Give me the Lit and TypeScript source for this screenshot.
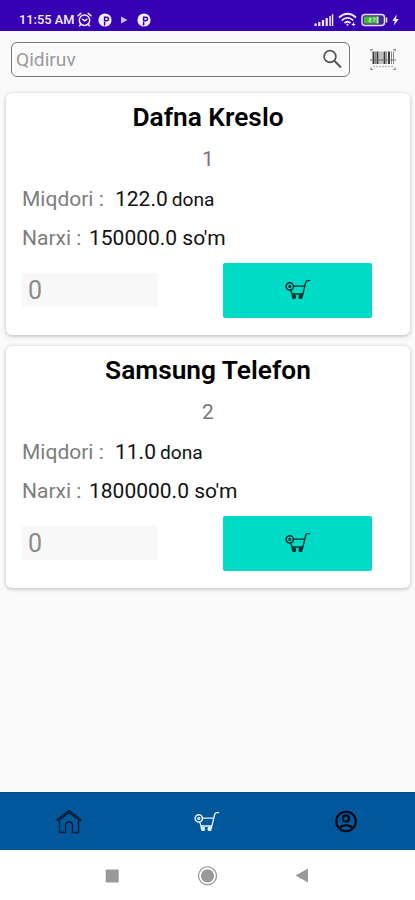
import { LitElement, html, css, svg } from "lit";
import { customElement, property } from "lit/decorators.js";

interface Product {
  id: number;
  name: string;
  amount: string;
  price: string;
}

const products: Product[] = [
  { id: 1, name: "Dafna Kreslo", amount: "122.0", price: "150000.0" },
  { id: 2, name: "Samsung Telefon", amount: "11.0", price: "1800000.0" },
];

const cartShape = svg`
  <g fill="none" stroke="currentColor" stroke-width="1.3" stroke-linecap="round" stroke-linejoin="round">
    <circle cx="4.8" cy="7.4" r="3.6" stroke-width="1.6"/>
    <circle cx="4.8" cy="7.4" r="1" stroke-width="1.2"/>
    <path d="M8.6 7.2H19.400M24.700 1.600h-2q-1.400 0-1.900 1.400L17.900 15H7.200L5.600 11.200"/>
    <path d="M7.200 15v2M17.500 15v2"/>
    <rect x="7.700" y="16.400" width="2.700" height="3" rx="1" fill="currentColor"/>
    <rect x="14.200" y="16.400" width="2.700" height="3" rx="1" fill="currentColor"/>
  </g>`;

const cartIcon = html`<svg width="26" height="22" viewBox="0 0 26 22">${cartShape}</svg>`;

const pIcon = html`<svg width="14" height="14" viewBox="0 0 14 14">
  <circle cx="7" cy="7" r="6.6" fill="#f2edff"/>
  <path d="M6.600 12.500V8.900M6.600 4.200h2.200a1.500 1.500 0 0 1 0 3.500H6.600z" fill="none" stroke="#3700b3" stroke-width="1.500"/>
</svg>`;

@customElement("product-card")
export class ProductCard extends LitElement {
  @property({ attribute: false }) product!: Product;

  static styles = css`
    :host {
      display: block;
      box-sizing: border-box;
      height: 242px;
      padding: 4px 17px 0 16px;
      background: #fff;
      border-radius: 6px;
      box-shadow: 0 1px 4px rgba(0, 0, 0, 0.26);
      color: #111;
      white-space: nowrap;
    }
    .title {
      height: 41px;
      line-height: 41px;
      text-align: center;
      font-size: 26.3px;
      font-weight: 600;
      color: #000;
      padding-left: 1px;
    }
    .id {
      height: 42px;
      line-height: 43px;
      text-align: center;
      font-size: 21px;
      color: #777;
      padding-left: 1px;
    }
    .line {
      display: flex;
      align-items: baseline;
      height: 39px;
      line-height: 39px;
      font-size: 21px;
    }
    .label { color: #7d7d7d; }
    .label.amount { width: 93px; }
    .label.price { width: 67px; }
    .unit { font-size: 19.2px; margin-left: 4px; }
    .actions {
      display: flex;
      justify-content: space-between;
      align-items: center;
      padding: 4.5px 21px 0 0;
    }
    .count {
      width: 130px;
      height: 34px;
      padding-left: 6px;
      line-height: 35px;
      background: #f8f8f8;
      color: #8b8b8b;
      font-size: 25px;
    }
    .add {
      display: flex;
      align-items: center;
      justify-content: center;
      width: 149px;
      height: 55px;
      padding: 0;
      border: 0;
      border-radius: 2px;
      background: #00dbc8;
      color: #0b2d2b;
    }
  `;

  render() {
    const p = this.product;
    return html`
      <div class="title">${p.name}</div>
      <div class="id">${p.id}</div>
      <div class="line">
        <span class="label amount">Miqdori :</span><span>${p.amount}</span><span class="unit">dona</span>
      </div>
      <div class="line">
        <span class="label price">Narxi :</span><span>${p.price} so'm</span>
      </div>
      <div class="actions">
        <div class="count">0</div>
        <button class="add">${cartIcon}</button>
      </div>
    `;
  }
}

@customElement("app-root")
export class AppRoot extends LitElement {
  static styles = css`
    :host {
      display: flex;
      flex-direction: column;
      height: 900px;
      overflow: hidden;
      background: #fafafa;
      font-family: Roboto, "Liberation Sans", sans-serif;
    }
    svg { display: block; flex: none; }
    .status {
      display: flex;
      align-items: center;
      box-sizing: border-box;
      height: 31px;
      padding: 8px 16px 0 19px;
      background: #3700b3;
      color: #f2edff;
      font-size: 12.8px;
      font-weight: 500;
      white-space: nowrap;
    }
    .clock { width: 58px; }
    .notes, .signals { display: flex; align-items: center; }
    .notes { gap: 5.5px; }
    .signals { gap: 4px; margin-left: auto; }
    .search {
      display: flex;
      align-items: center;
      height: 62px;
      box-sizing: border-box;
      padding: 0 18px 5px 11px;
    }
    .field {
      display: flex;
      align-items: center;
      justify-content: space-between;
      box-sizing: border-box;
      width: 339px;
      height: 35px;
      margin-right: 19px;
      padding: 0 6px 0 4px;
      border: 1.4px solid #777;
      border-radius: 6px;
      color: #9a9a9a;
      font-size: 19.2px;
    }
    .list {
      display: flex;
      flex-direction: column;
      gap: 11px;
      flex: 1;
      padding: 0 5px 0 6px;
    }
    .tabs {
      display: grid;
      grid-template-columns: repeat(3, 1fr);
      place-items: center;
      height: 58px;
      background: #01579b;
      border-top: 1px solid #0a4886;
      box-sizing: border-box;
      color: #08192b;
    }
    .active { color: #e8f1fa; }
    .system {
      display: flex;
      align-items: center;
      justify-content: space-between;
      box-sizing: border-box;
      height: 50px;
      padding: 1px 106px 0 105px;
      background: #fff;
    }
  `;

  render() {
    return html`
      <div class="status">
        <span class="clock">11:55 AM</span>
        <div class="notes">
          <svg width="15" height="15" viewBox="0 0 15 15" fill="none" stroke="currentColor" stroke-width="1.5" stroke-linecap="round">
            <circle cx="7.5" cy="8.2" r="5.2"/><path d="M1 3.8L3.8 1.4M14 3.8l-2.8-2.4M5.6 7.4l1.9 1.5 2.3-1.6M3.7 12.4l-1.2 1.4M11.3 12.4l1.2 1.4"/>
          </svg>
          ${pIcon}
          <svg width="14" height="14" viewBox="0 0 14 14"><path d="M4 3.5v7L10.5 7z" fill="#cbbcf3"/></svg>
          ${pIcon}
        </div>
        <div class="signals">
          <svg width="20" height="14" viewBox="0 0 20 14" fill="currentColor">
            <path d="M.5 10.5h2.2V13H.5zM4.2 9h2.2v4H4.2zM7.9 7h2.2v6H7.9zM11.6 5h2.2v8h-2.2zM15.3 3h1.5v10h-1.5zM17.8 1.2h1.5V13h-1.5z"/>
          </svg>
          <svg width="19" height="15" viewBox="0 0 19 15" fill="none" stroke="currentColor" stroke-width="1.8">
            <path d="M1 5.5q8.500-7.500 17 0M3.700 8.400q5.800-5 11.600 0M6.500 11q3-2.600 6 0"/><circle cx="9.500" cy="12.700" r="1" fill="currentColor" stroke="none"/><path d="M15.500 10.500v3.500M13.800 12.500h3.400" stroke-width="1.200"/>
          </svg>
          <svg width="27" height="14" viewBox="0 0 27 14">
            <rect x="1" y="1.500" width="22.500" height="11" rx="3" fill="#3f2a8f" stroke="#e5ddfb" stroke-width="1.500"/>
            <path d="M3 3.500h12.500v7H3z" fill="#43b63e"/><path d="M15.500 3.500h2v7h-2z" fill="#c8e8c8"/><path d="M8 5.200h2v1.700H8.200v1.900h2.200M12 5.200h2.200L12.700 8.800" fill="none" stroke="#d8f5d0" stroke-width=".9"/>
            <path d="M25.500 4.500v5" stroke="#e5ddfb" stroke-width="1.600"/>
          </svg>
          <svg width="7" height="12" viewBox="0 0 7 12"><path d="M4.800.5L.3 6.800h2.500L1.800 11.500 6.800 5H4z" fill="currentColor"/></svg>
        </div>
      </div>
      <div class="search">
        <div class="field">
          <span>Qidiruv</span>
          <svg width="21" height="21" viewBox="0 0 21 21" fill="none" stroke="#555">
            <circle cx="8" cy="7.500" r="5.900" stroke-width="1.700"/><path d="M12.300 11.800l6.700 6.700" stroke-width="2"/>
          </svg>
        </div>
        <svg width="28" height="24" viewBox="0 0 28 24" fill="none" stroke="#333">
          <path d="M2 3.500V1.500H4M24 1.500h2.200V3.500M2 19.500v2H4M24 21.500h2.200V19.500" stroke="#888" stroke-width="1.200"/>
          <path d="M4.500 3.500v12.500M8.500 3.500v12.500M15.500 3.500v12.500M20 3.500v12.500" stroke-width="1.900"/>
          <path d="M6.500 3.500v12.500M11 3.500v12.500M13 3.500v12.500M17.700 3.500v12.500M22.500 3.500v12.500M24.500 3.500v12.500" stroke="#777" stroke-width=".9"/>
          <path d="M1 12h26" stroke="#666" stroke-width=".9"/>
          <path d="M4 18.500h21" stroke="#bbb" stroke-width="1.500" stroke-dasharray="2 1"/>
        </svg>
      </div>
      <div class="list">
        ${products.map((p) => html`<product-card .product=${p}></product-card>`)}
      </div>
      <div class="tabs">
        <svg width="26" height="26" viewBox="0 0 26 26" fill="none" stroke="currentColor" stroke-width="1.300" stroke-linejoin="round" stroke-linecap="round">
          <path d="M1 10.800L13 1.500l12 9.300-1.100 1L13 3.700 2.200 11.800zM3.500 12v11.500h6v-7.500q0-3 3.500-3t3.500 3V23.500h6V12"/>
        </svg>
        <div class="active">${cartIcon}</div>
        <svg width="26" height="26" viewBox="0 0 24 24" fill="none" stroke="#03090f" stroke-width="2">
          <circle cx="12" cy="11.500" r="9"/><circle cx="12" cy="8.800" r="2.800"/><path d="M5.800 17.700Q8.200 15 12 15t6.200 2.700"/>
        </svg>
      </div>
      <div class="system">
        <svg width="14" height="14" viewBox="0 0 14 14"><rect x=".7" y=".5" width="13" height="13" fill="#999"/></svg>
        <svg width="20" height="20" viewBox="0 0 20 20"><circle cx="10.500" cy="9.800" r="9" fill="none" stroke="#999" stroke-width="1.300"/><circle cx="10.500" cy="9.800" r="6.600" fill="#999"/></svg>
        <svg width="14" height="15" viewBox="0 0 14 15"><path d="M13 .5v14L.5 7.500z" fill="#999"/></svg>
      </div>
    `;
  }
}
